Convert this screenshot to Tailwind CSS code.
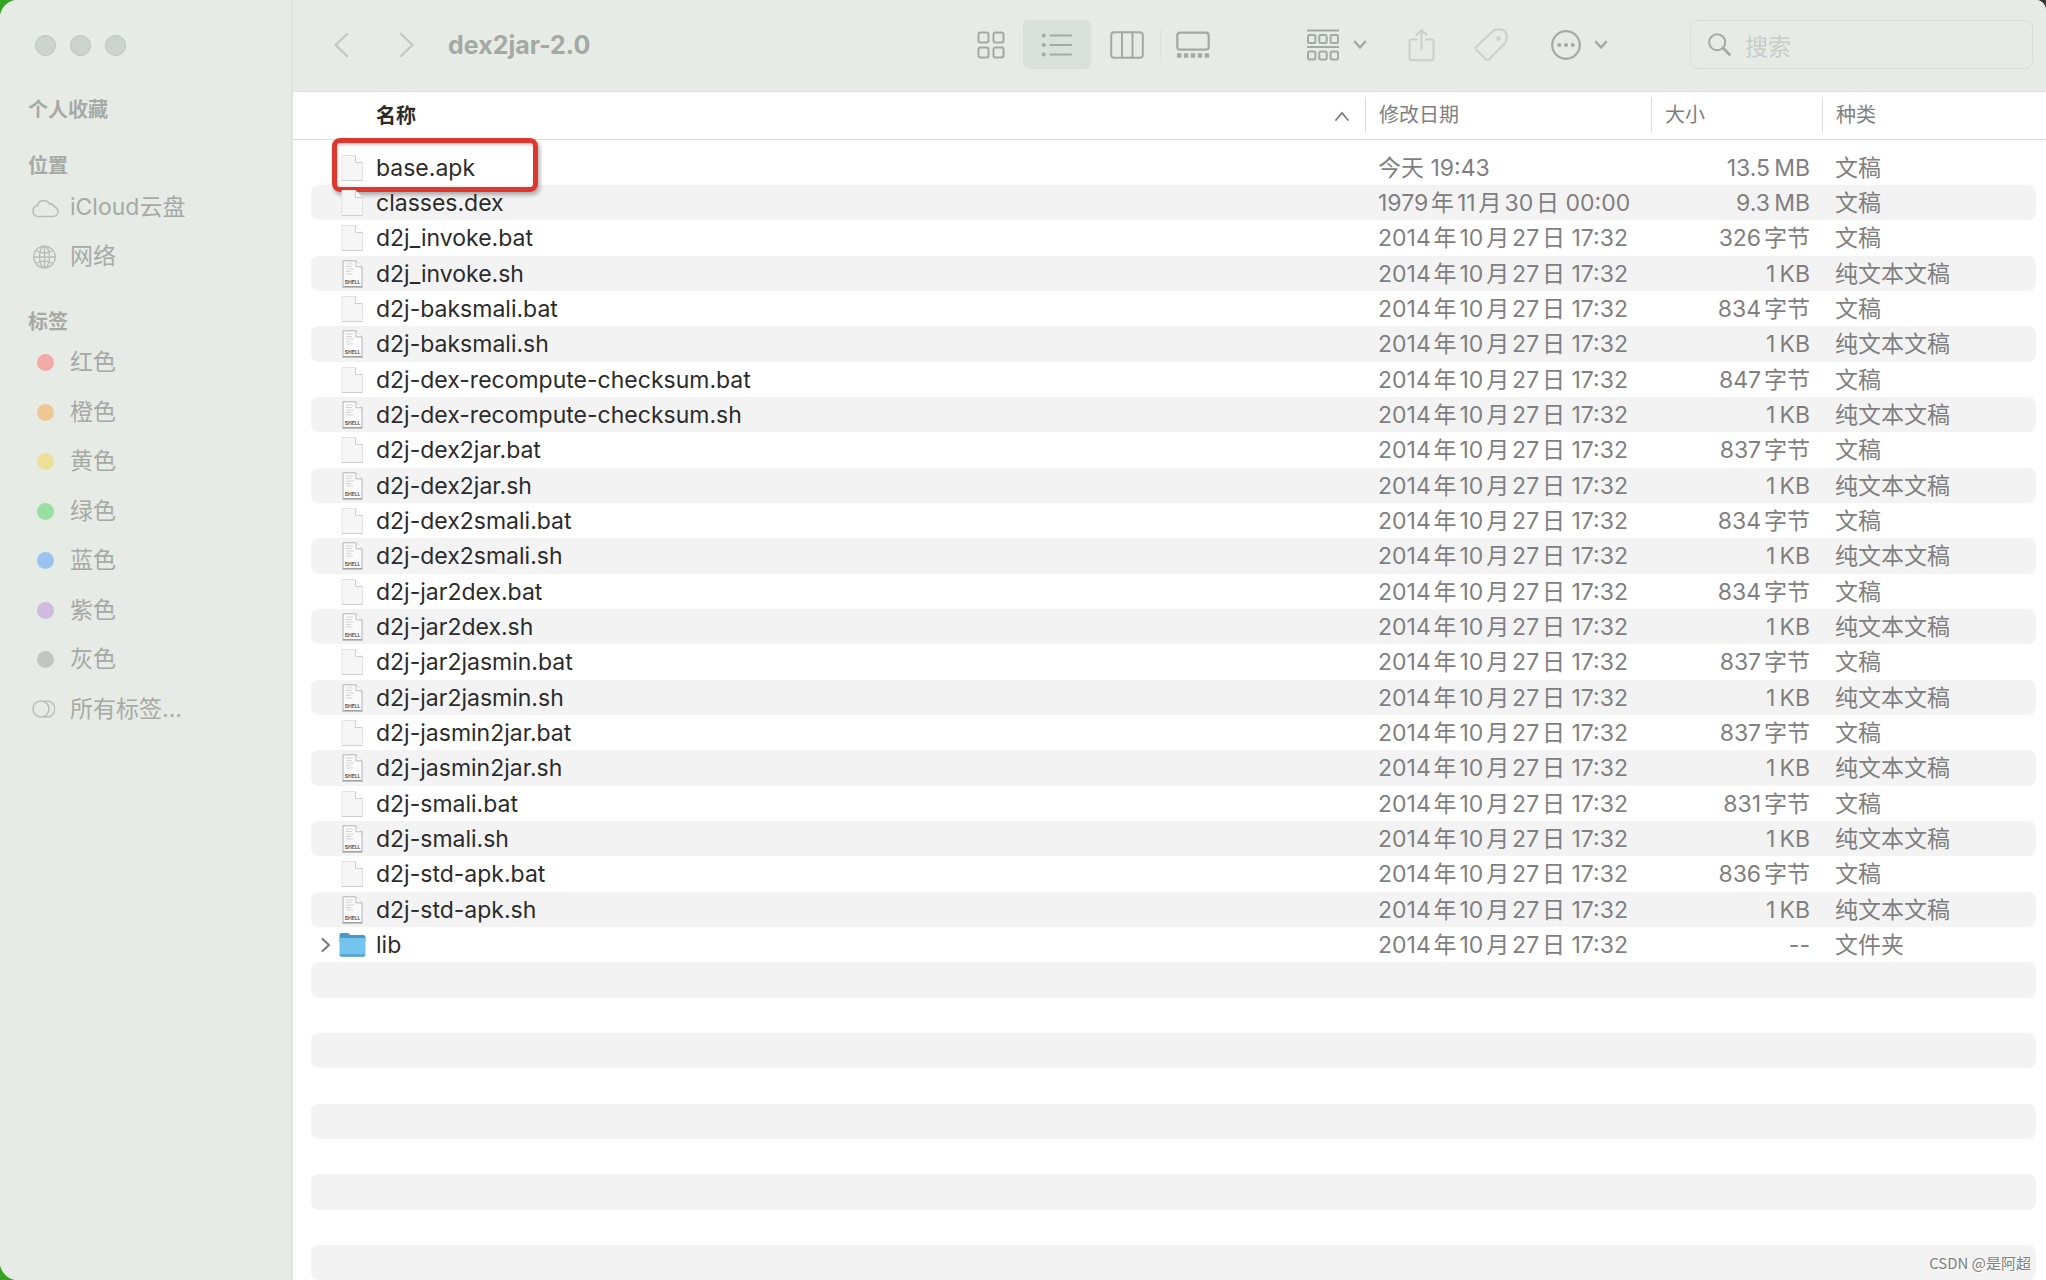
<!DOCTYPE html>
<html lang="zh-CN">
<head>
<meta charset="utf-8">
<title>dex2jar-2.0</title>
<script src="https://cdn.jsdelivr.net/npm/@tailwindcss/browser@4"></script>
</head>
<body class="h-screen overflow-hidden bg-linear-to-r from-[#35a324] to-[#35352c] font-['Inter','Noto_Sans_CJK_SC',sans-serif] [text-autospace:no-autospace]">
<div class="relative flex h-full overflow-hidden rounded-l-[18px] rounded-tr-[10px] bg-white">

  <aside class="w-[293px] shrink-0 border-r-2 border-[#e0e2de] bg-[#e6ebe5] text-[23px] text-[#a6aaa5]">
    <div class="flex gap-[14px] pt-[35px] pl-[35px]">
      <button aria-label="关闭" class="size-[21px] rounded-full border border-[#bcc3bc] bg-[#cdd3cd]"></button>
      <button aria-label="最小化" class="size-[21px] rounded-full border border-[#bcc3bc] bg-[#cdd3cd]"></button>
      <button aria-label="缩放" class="size-[21px] rounded-full border border-[#bcc3bc] bg-[#cdd3cd]"></button>
    </div>
    <h2 class="mt-[39px] pl-7 text-[20px] leading-[30px] font-bold">个人收藏</h2>
    <h2 class="mt-[26px] pl-7 text-[20px] leading-[30px] font-bold">位置</h2>
    <nav aria-label="位置" class="mt-[2px]">
      <a href="#" class="flex h-[49px] items-center pl-[31px]"><svg class="mr-[11px] h-5 w-7" viewBox="0 0 28 20" fill="none" stroke="#b9beb8" stroke-width="1.6"><path d="M6.500 18.500h15.500a5 5 0 0 0 1-9.900A4 4 0 0 0 18.500 6 6.500 6.500 0 0 0 6.500 7.500 5.600 5.600 0 0 0 6.500 18.500Z"/></svg><span class="whitespace-nowrap">iCloud云盘</span></a>
      <a href="#" class="flex h-[49px] items-center pl-[31px]"><svg class="mr-[11px] h-6 w-7" viewBox="0 0 28 24" fill="none" stroke="#b9beb8" stroke-width="1.400"><circle cx="13.500" cy="12" r="10.800"/><ellipse cx="13.500" cy="12" rx="5" ry="10.800"/><path d="M13.500 1.200v21.600M2.700 12h21.600M5 5.500q8.500 5 17 0M5 18.500q8.500-5 17 0"/></svg><span>网络</span></a>
    </nav>
    <h2 class="mt-[26px] pl-7 text-[20px] leading-[30px] font-bold">标签</h2>
    <nav id="tags" aria-label="标签" class="mt-[1px]"></nav>
  </aside>

  <div class="flex min-w-0 flex-1 flex-col">
    <header class="flex h-[92px] shrink-0 items-center border-b border-[#dde1db] bg-[#e6ebe5] pr-[13px] pb-[2px] text-[#a3aaa3]">
      <button aria-label="后退" class="ml-10"><svg class="h-[26px] w-4" viewBox="0 0 16 26" fill="none" stroke="#c3c8c2" stroke-width="2.400" stroke-linecap="round" stroke-linejoin="round"><path d="M14 2 2.500 13 14 24"/></svg></button>
      <button aria-label="前进" class="ml-[50px]"><svg class="h-[26px] w-4" viewBox="0 0 16 26" fill="none" stroke="#c3c8c2" stroke-width="2.400" stroke-linecap="round" stroke-linejoin="round"><path d="M2 2 13.500 13 2 24"/></svg></button>
      <h1 class="ml-[33px] text-[25px] leading-8 font-bold whitespace-nowrap text-[#a3a9a3]">dex2jar-2.0</h1>

      <div class="ml-auto flex items-center">
        <button aria-label="图标显示" class="mr-[18px]"><svg class="size-7" viewBox="0 0 28 28" fill="none" stroke="currentColor" stroke-width="2"><rect x="1.500" y="1.500" width="10" height="10" rx="2"/><rect x="16.500" y="1.500" width="10" height="10" rx="2"/><rect x="1.500" y="16.500" width="10" height="10" rx="2"/><rect x="16.500" y="16.500" width="10" height="10" rx="2"/></svg></button>
        <button aria-label="列表显示" aria-pressed="true" class="mr-[19px] flex h-[49px] w-[68px] items-center justify-center rounded-md bg-[#dae0da]"><svg class="h-6 w-8" viewBox="0 0 32 24" stroke="currentColor" fill="currentColor" stroke-width="2"><path d="M9.500 2.500h20.500M9.500 12h20.500M9.500 21.500h20.500" stroke-linecap="round"/><g stroke="none"><circle cx="2.800" cy="2.500" r="2"/><circle cx="2.800" cy="12" r="2"/><circle cx="2.800" cy="21.500" r="2"/></g></svg></button>
        <button aria-label="分栏显示" class="mr-4"><svg class="h-7 w-[34px]" viewBox="0 0 34 28" fill="none" stroke="currentColor" stroke-width="2"><rect x="1.200" y="1.200" width="31.600" height="25.600" rx="3"/><path d="M12 1v26M22.500 1v26"/></svg></button>
        <span class="mr-[15px] h-8 w-px bg-[#dce1db]"></span>
        <button aria-label="画廊显示" class="mr-[97px]"><svg class="h-7 w-[34px]" viewBox="0 0 34 28" fill="none" stroke="currentColor" stroke-width="2.200"><rect x="1.300" y="1.700" width="31.400" height="17" rx="3"/><path d="M1 24.500h32" stroke-width="4.400" stroke-dasharray="4.400 2.500"/></svg></button>
        <button aria-label="群组" class="mr-[41px] flex items-center gap-[14px]"><svg class="h-8 w-8" viewBox="0 0 32 32" fill="none" stroke="currentColor" stroke-width="2"><path d="M0 1.500h32M0 18h32"/><rect x="1" y="6" width="7.400" height="8" rx="1.500"/><rect x="12.300" y="6" width="7.400" height="8" rx="1.500"/><rect x="23.600" y="6" width="7.400" height="8" rx="1.500"/><rect x="1" y="22.500" width="7.400" height="8" rx="1.500"/><rect x="12.300" y="22.500" width="7.400" height="8" rx="1.500"/><rect x="23.600" y="22.500" width="7.400" height="8" rx="1.500"/></svg><svg class="h-[10px] w-[14px]" viewBox="0 0 14 10" fill="none" stroke="currentColor" stroke-width="2.600" stroke-linecap="round" stroke-linejoin="round"><path d="M2 2l5 5.500L12 2"/></svg></button>
        <button aria-label="共享" class="mr-[39px] text-[#cbd0ca]"><svg class="h-[34px] w-[27px]" viewBox="0 0 27 34" fill="none" stroke="currentColor" stroke-width="2" stroke-linecap="round" stroke-linejoin="round"><path d="M9 11.500H3.500A2 2 0 0 0 1.500 13.500V30A2.300 2.300 0 0 0 3.800 32.300H23.200A2.300 2.300 0 0 0 25.500 30V13.500A2 2 0 0 0 23.500 11.500H18M13.500 21.500V2M8.500 7l5-5 5 5"/></svg></button>
        <button aria-label="标签" class="mr-[43px] text-[#cbd0ca]"><svg class="h-[34px] w-[34px]" viewBox="0 0 34 34" fill="none" stroke="currentColor" stroke-width="2" stroke-linejoin="round"><path d="M18.500 3.500Q20.500 1.500 23 1.500H26Q32.500 1.500 32.500 8V11Q32.500 13.500 30.500 15.500L15.500 31Q13.500 33 11.500 31L2.500 22Q.800 20 2.500 18.500Z"/><circle cx="24.500" cy="10.500" r="1.200"/></svg></button>
        <button aria-label="操作" class="mr-[82px] flex items-center gap-[13px]"><svg class="size-[30px]" viewBox="0 0 30 30" fill="none" stroke="currentColor" stroke-width="2.200"><circle cx="15" cy="15" r="13.800"/><g fill="currentColor" stroke="none"><circle cx="8.300" cy="15" r="2"/><circle cx="15" cy="15" r="2"/><circle cx="21.700" cy="15" r="2"/></g></svg><svg class="h-[10px] w-[14px]" viewBox="0 0 14 10" fill="none" stroke="currentColor" stroke-width="2.600" stroke-linecap="round" stroke-linejoin="round"><path d="M2 2l5 5.500L12 2"/></svg></button>
        <label class="flex h-[49px] w-[343px] items-center rounded-lg border border-[#d9ded8] pl-[17px]"><svg class="mr-[14px] size-[23px] shrink-0" viewBox="0 0 23 23" fill="none" stroke="currentColor" stroke-width="2"><circle cx="9.200" cy="9.200" r="8"/><path d="m15 15 6.500 6.500" stroke-width="2.600" stroke-linecap="round"/></svg><input type="search" aria-label="搜索" placeholder="搜索" class="w-full min-w-0 bg-transparent pt-[6px] text-[23px] outline-none placeholder:text-[#c8cdc7]"></label>
      </div>
    </header>

    <main class="min-h-0 flex-1 overflow-hidden">
      <table class="w-full table-fixed border-separate border-spacing-0 text-[23px] text-[#7f7f7f]">
        <colgroup><col class="w-[18px]"><col><col class="w-[286px]"><col class="w-[171px]"><col class="w-[214px]"><col class="w-[10px]"></colgroup>
        <thead class="text-left text-[20px] leading-7 [&_th]:h-[48px] [&_th]:border-b [&_th]:border-[#dcdcdc] [&_th]:p-0 [&_th]:font-normal">
          <tr>
            <th></th>
            <th aria-sort="ascending"><div class="flex items-center justify-between pr-4 pl-[65px]"><span class="font-bold text-[#2b2b2b]">名称</span><svg class="h-[10px] w-[14px]" viewBox="0 0 14 10" fill="none" stroke="#7d7d7d" stroke-width="1.800" stroke-linecap="round"><path d="M1 9l6-7 6 7"/></svg></div></th>
            <th><div class="mb-[2px] border-l border-[#dedede] pl-[13px] leading-9">修改日期</div></th>
            <th><div class="mb-[2px] border-l border-[#dedede] pl-[13px] leading-9">大小</div></th>
            <th><div class="mb-[2px] border-l border-[#dedede] pl-[13px] leading-9">种类</div></th>
            <th></th>
          </tr>
        </thead>
        <tbody aria-hidden="true"><tr class="h-[10px]"><td colspan="6" class="p-0"></td></tr></tbody>
        <tbody id="files" class="leading-[34px] whitespace-nowrap [&_td]:p-0 [&>tr]:h-[35px] [&>tr:nth-child(3n)]:h-9 [&>tr:nth-child(even)>td:not(:first-child,:last-child)]:bg-[#f3f3f4] [&_td:nth-child(2)]:rounded-l-lg [&_td:nth-child(5)]:rounded-r-lg"></tbody>
      </table>
    </main>
  </div>
  <p class="absolute right-[15px] bottom-[6px] font-['Noto_Sans_CJK_SC',sans-serif] text-[15px] leading-[22px] text-[#808080] [text-shadow:1px_1px_0_#fff]">CSDN @是阿超</p>
</div>

<script>
const tags = [['红色', '#f2aaa8'], ['橙色', '#efc795'], ['黄色', '#eddf94'], ['绿色', '#98dfa1'], ['蓝色', '#9bc3f1'], ['紫色', '#d0bbe1'], ['灰色', '#c1c7c0']];
document.getElementById('tags').innerHTML = tags.map(([name, color]) =>
  `<a href="#" class="flex h-[49px] items-center pl-[37px] even:h-[50px]"><span class="mr-4 size-[17px] rounded-full" style="background:${color}"></span><span>${name}</span></a>`).join('') +
  `<a href="#" class="flex h-[49px] items-center pl-8 even:h-[50px]"><svg class="mr-[15px] h-[18px] w-[23px]" viewBox="0 0 23 18" fill="none" stroke="#b9beb8" stroke-width="1.500"><circle cx="9" cy="9" r="8"/><path d="M12 1.500a8 8 0 1 1 0 15"/></svg><span>所有标签...</span></a>`;

const page = '<path d="M1 .500h13.500l7 7V25.500H1Z" fill="#f6f6f6" stroke="#e2e2e2"/><path d="M14.500.500v7h7" fill="#fff" stroke="#cfcfcf"/>';
const icons = {
  doc: `<svg class="h-[26px] w-[23px]" viewBox="0 0 23 26">${page}<path d="M1 25.500h20.500" stroke="#cfcfcf"/></svg>`,
  shell: '<svg class="h-[28px] w-[23px]" viewBox="0 0 23 28"><path d="M2 .800h13l6 6V26.500h-19Z" fill="#fafafa" stroke="#b4b4b4"/><path d="M1.500 27h20" stroke="#8f8f8f"/><path d="M15 .800v6h6" fill="#fff" stroke="#b8b8b8"/><path d="M5 4h7M5 6.500h6M5 9h8M5 11.500h5M5 14h7" stroke="#d4d4d4"/><text x="11.500" y="23.500" text-anchor="middle" font-size="5" font-weight="700" fill="#555">SHELL</text></svg>',
  folder: '<svg class="h-[26px] w-[27px]" viewBox="0 0 27 26"><path d="M.500 3Q.500 1 2.500 1H9l2.500 2H24.500Q26.500 3 26.500 5V10H.500Z" fill="#4a98c6"/><path d="M.500 6H26.500V22.500Q26.500 24.500 24.500 24.500H2.500Q.500 24.500.500 22.500Z" fill="#74c5ee"/><path d="M.600 22.300H26.400Q26.400 24.800 24.500 24.800H2.500Q.600 24.800.600 22.300Z" fill="#559fca"/></svg>'
};
const date = '2014年10月27日 17:32';
const pairs = [['d2j_invoke', 326], ['d2j-baksmali', 834], ['d2j-dex-recompute-checksum', 847], ['d2j-dex2jar', 837], ['d2j-dex2smali', 834], ['d2j-jar2dex', 834], ['d2j-jar2jasmin', 837], ['d2j-jasmin2jar', 837], ['d2j-smali', 831], ['d2j-std-apk', 836]];
const files = [['base.apk', '今天 19:43', '13.5\u2009MB', '文稿', 'doc'], ['classes.dex', '1979年11月30日 00:00', '9.3\u2009MB', '文稿', 'doc']];
for (const [name, bytes] of pairs) files.push([name + '.bat', date, bytes + '字节', '文稿', 'doc'], [name + '.sh', date, '1\u2009KB', '纯文本文稿', 'shell']);
files.push(['lib', date, '--', '文件夹', 'folder']);
const mark = '<span class="absolute -top-3 left-[21px] h-[54px] w-[206px] rounded-lg border-[5px] border-[#dc382d] shadow-[2px_3px_4px_rgba(0,0,0,0.3),inset_1px_2px_3px_rgba(0,0,0,0.2)]"></span>';
const arrow = '<button aria-label="展开" class="flex h-full w-full items-center pl-[10px]"><svg class="h-4 w-[10px]" viewBox="0 0 10 16" fill="none" stroke="#7d7d7d" stroke-width="2.200" stroke-linecap="round" stroke-linejoin="round"><path d="M1.500 2l6.500 6-6.500 6"/></svg></button>';
document.getElementById('files').innerHTML = files.map(([name, when, size, kind, icon], i) =>
  `<tr><td></td><td><div class="relative flex h-[35px] items-center text-[#2b2b2b]"><span class="h-full w-[25px]">${icon === 'folder' ? arrow : ''}</span><span class="mr-[7px] flex w-[33px] justify-center">${icons[icon]}</span><span>${name}</span>${i ? '' : mark}</div></td><td class="[text-autospace:normal]"><span class="pl-[13px]">${when}</span></td><td class="text-right [text-autospace:normal]"><span class="pr-3">${size}</span></td><td><span class="pl-[13px]">${kind}</span></td><td></td></tr>`).join('') +
  '<tr><td></td><td></td><td></td><td></td><td></td><td></td></tr>'.repeat(9);
</script>
</body>
</html>
